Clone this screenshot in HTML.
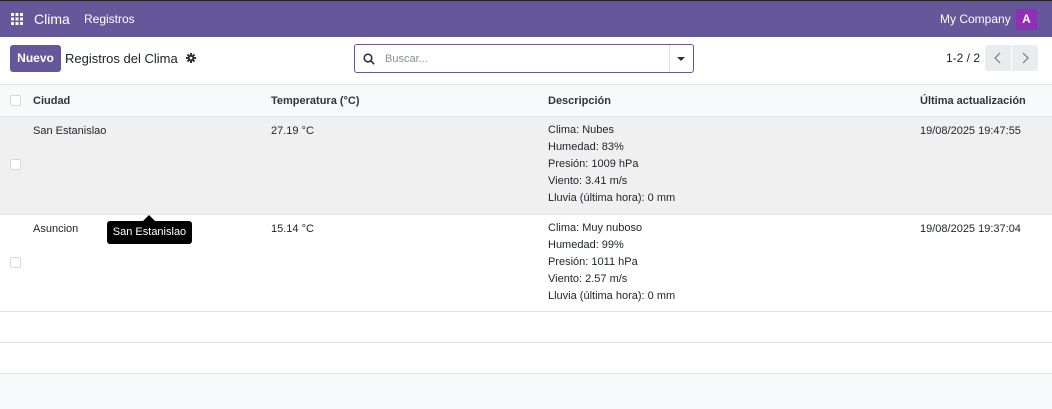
<!DOCTYPE html>
<html><head><meta charset="utf-8"><style>
*{box-sizing:border-box;margin:0;padding:0}
body{width:1052px;height:409px;overflow:hidden;font-family:"Liberation Sans",sans-serif;font-size:11px;color:#212529;background:#f8f9fa;position:relative}
.nav{position:absolute;left:0;top:0;width:1052px;height:37px;background:#65589a;border-top:1px solid #222;color:#fff}
.cp{position:absolute;top:37px;left:0;width:1052px;height:48px;background:#fff;border-bottom:1px solid #dee2e6}
.abs{position:absolute}
.hdr{position:absolute;top:85px;left:0;width:1052px;height:32px;background:#f8f9fa;border-bottom:1px solid #dee2e6;font-weight:bold;color:#333}
.row{position:absolute;left:0;width:1052px;border-bottom:1px solid #dee2e6;background:#fff}
.cb{position:absolute;left:10px;width:11px;height:11px;border:1px solid #d5d8dc;border-radius:2px;background:#fff}
.desc{line-height:17px}
</style></head><body>
<div class="nav">
 <svg class="abs" style="left:11px;top:12px" width="12" height="12" viewBox="0 0 12 12" fill="#fff"><rect x="0" y="0" width="3" height="3"/><rect x="4.5" y="0" width="3" height="3"/><rect x="9" y="0" width="3" height="3"/><rect x="0" y="4.5" width="3" height="3"/><rect x="4.5" y="4.5" width="3" height="3"/><rect x="9" y="4.5" width="3" height="3"/><rect x="0" y="9" width="3" height="3"/><rect x="4.5" y="9" width="3" height="3"/><rect x="9" y="9" width="3" height="3"/></svg>
 <div class="abs" style="left:34px;top:10px;font-size:14px">Clima</div>
 <div class="abs" style="left:84px;top:11px;font-size:12px">Registros</div>
 <div class="abs" style="left:940px;top:11px;font-size:12px">My Company</div>
 <div class="abs" style="left:1016px;top:8px;width:21px;height:21px;background:#8f2fb5;border-radius:2px;text-align:center;line-height:21px;font-weight:bold;font-size:12px">A</div>
</div>
<div class="cp">
 <div class="abs" style="left:10px;top:8px;width:51px;height:27px;background:#65589a;border-radius:3px;color:#fff;font-weight:bold;font-size:12px;text-align:center;line-height:27px">Nuevo</div>
 <div class="abs" style="left:65px;top:14px;font-size:13px">Registros del Clima</div>
 <svg class="abs" style="left:186px;top:16px" width="10" height="10" viewBox="0 0 10 10"><g fill="#333"><circle cx="5" cy="5" r="3.3"/><rect x="4" y="0" width="2" height="10"/><rect x="0" y="4" width="10" height="2"/><rect x="4" y="0" width="2" height="10" transform="rotate(45 5 5)"/><rect x="4" y="0" width="2" height="10" transform="rotate(-45 5 5)"/></g><circle cx="5" cy="5" r="1.3" fill="#fff"/></svg>
 <div class="abs" style="left:354px;top:7px;width:340px;height:29px;border:1px solid #65589a;border-radius:3px;background:#fff">
  <svg class="abs" style="left:8px;top:8px" width="12" height="12" viewBox="0 0 12 12" fill="none" stroke="#333" stroke-width="1.6"><circle cx="5" cy="5" r="3.8"/><path d="M8 8l3.2 3.2"/></svg>
  <div class="abs" style="left:30px;top:8px;color:#8a8f95">Buscar...</div>
  <div class="abs" style="left:314px;top:0;width:1px;height:27px;background:#dee2e6"></div>
  <div class="abs" style="left:322px;top:12px;width:0;height:0;border-left:4px solid transparent;border-right:4px solid transparent;border-top:4px solid #333"></div>
 </div>
 <div class="abs" style="left:946px;top:14px;font-size:12px">1-2 / 2</div>
 <div class="abs" style="left:985px;top:8px;width:53px;height:26px;background:#e9ecef;border-radius:3px"></div>
 <div class="abs" style="left:1011px;top:8px;width:1px;height:26px;background:#fff"></div>
 <svg class="abs" style="left:994px;top:15px" width="8" height="12" viewBox="0 0 8 12" fill="none" stroke="#777" stroke-width="1.2"><path d="M6 1L1 6l5 5"/></svg>
 <svg class="abs" style="left:1021px;top:15px" width="8" height="12" viewBox="0 0 8 12" fill="none" stroke="#777" stroke-width="1.2"><path d="M2 1l5 5-5 5"/></svg>
</div>
<div class="hdr">
 <div class="cb" style="top:10px"></div>
 <div class="abs" style="left:33px;top:10px">Ciudad</div>
 <div class="abs" style="left:271px;top:10px">Temperatura (°C)</div>
 <div class="abs" style="left:548px;top:10px">Descripción</div>
 <div class="abs" style="left:920px;top:10px">Última actualización</div>
</div>
<div class="row" style="top:117px;height:98px;background:#f0f0f0">
 <div class="cb" style="top:42px"></div>
 <div class="abs" style="left:33px;top:8px">San Estanislao</div>
 <div class="abs" style="left:271px;top:8px">27.19 °C</div>
 <div class="abs desc" style="left:548px;top:5px">Clima: Nubes<br>Humedad: 83%<br>Presión: 1009 hPa<br>Viento: 3.41 m/s<br>Lluvia (última hora): 0 mm</div>
 <div class="abs" style="left:920px;top:8px">19/08/2025 19:47:55</div>
</div>
<div class="row" style="top:215px;height:97px">
 <div class="cb" style="top:42px"></div>
 <div class="abs" style="left:33px;top:8px">Asuncion</div>
 <div class="abs" style="left:271px;top:8px">15.14 °C</div>
 <div class="abs desc" style="left:548px;top:5px">Clima: Muy nuboso<br>Humedad: 99%<br>Presión: 1011 hPa<br>Viento: 2.57 m/s<br>Lluvia (última hora): 0 mm</div>
 <div class="abs" style="left:920px;top:8px">19/08/2025 19:37:04</div>
</div>
<div class="row" style="top:312px;height:31px"></div>
<div class="row" style="top:343px;height:31px"></div>
<div class="abs" style="left:143px;top:215px;width:0;height:0;border-left:6px solid transparent;border-right:6px solid transparent;border-bottom:6px solid #000"></div>
<div class="abs" style="left:107px;top:221px;width:85px;height:23px;background:#000;color:#fff;border-radius:3px;text-align:center;line-height:23px">San Estanislao</div>
</body></html>
